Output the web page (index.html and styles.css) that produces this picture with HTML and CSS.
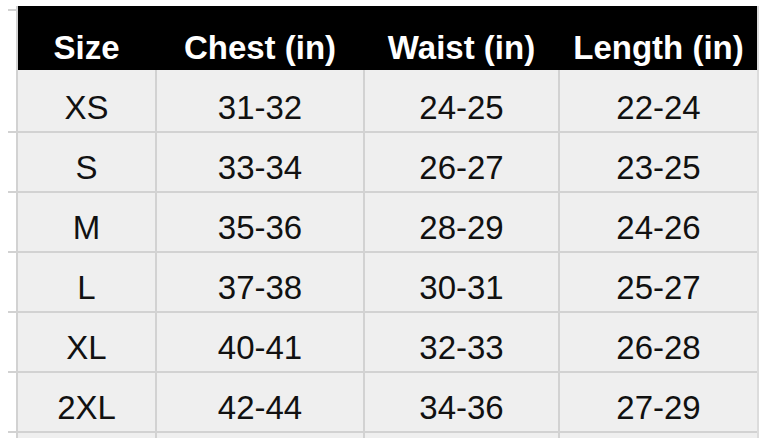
FILE: index.html
```html
<!DOCTYPE html>
<html>
<head>
<meta charset="utf-8">
<link rel="stylesheet" href="styles.css">
</head>
<body>
<div class="sheet">
  <div class="row head">
    <div class="gutter gutter-head"></div>
    <div class="cells">
      <div class="cell c1">Size</div>
      <div class="cell c2">Chest (in)</div>
      <div class="cell c3">Waist (in)</div>
      <div class="cell c4">Length (in)</div>
    </div>
  </div>
  <div class="row body first">
    <div class="gutter"></div>
    <div class="cells">
      <div class="cell c1">XS</div><div class="cell c2">31-32</div><div class="cell c3">24-25</div><div class="cell c4">22-24</div>
    </div>
  </div>
  <div class="row body">
    <div class="gutter"></div>
    <div class="cells">
      <div class="cell c1">S</div><div class="cell c2">33-34</div><div class="cell c3">26-27</div><div class="cell c4">23-25</div>
    </div>
  </div>
  <div class="row body">
    <div class="gutter"></div>
    <div class="cells">
      <div class="cell c1">M</div><div class="cell c2">35-36</div><div class="cell c3">28-29</div><div class="cell c4">24-26</div>
    </div>
  </div>
  <div class="row body">
    <div class="gutter"></div>
    <div class="cells">
      <div class="cell c1">L</div><div class="cell c2">37-38</div><div class="cell c3">30-31</div><div class="cell c4">25-27</div>
    </div>
  </div>
  <div class="row body">
    <div class="gutter"></div>
    <div class="cells">
      <div class="cell c1">XL</div><div class="cell c2">40-41</div><div class="cell c3">32-33</div><div class="cell c4">26-28</div>
    </div>
  </div>
  <div class="row body">
    <div class="gutter"></div>
    <div class="cells">
      <div class="cell c1">2XL</div><div class="cell c2">42-44</div><div class="cell c3">34-36</div><div class="cell c4">27-29</div>
    </div>
  </div>
  <div class="row tail">
    <div class="gutter"></div>
    <div class="cells">
      <div class="cell c1"></div><div class="cell c2"></div><div class="cell c3"></div><div class="cell c4"></div>
    </div>
  </div>
</div>
</body>
</html>
```
FILE: styles.css
```css
html, body {
  margin: 0;
  padding: 0;
  background: #ffffff;
}
body {
  width: 776px;
  height: 438px;
  overflow: hidden;
  font-family: "Liberation Sans", Arial, sans-serif;
}
.sheet {
  padding-top: 6px;
  padding-left: 8px;
}
.row {
  display: flex;
}
.gutter {
  width: 8px;
  flex: none;
  box-sizing: border-box;
  border-bottom: 2px solid #d2d2d2;
}
.gutter-head {
  border-bottom: none;
  margin-top: 3px;
  border-top: 2px solid #d2d2d2;
}
.cells {
  display: flex;
  border-left: 2px solid #d2d2d2;
  border-right: 2px solid #dcdcdc;
}
.cell {
  flex: none;
  text-align: center;
  box-sizing: border-box;
}
.c1 { width: 137px; }
.c2 { width: 208px; }
.c3 { width: 195px; }
.c4 { width: 199px; }

.head .cells {
  background: #000000;
}
.head .cell {
  height: 64px;
  padding-top: 22px;
  line-height: 40px;
  font-size: 33px;
  font-weight: bold;
  color: #ffffff;
}
.head .cell + .cell {
  border-left: 2px solid #000000;
}

.body .cell {
  height: 60px;
  padding-top: 15px;
  line-height: 40px;
  font-size: 33px;
  color: #111111;
  background: #efefef;
  border-bottom: 2px solid #d2d2d2;
}
.body .cell + .cell,
.tail .cell + .cell {
  border-left: 2px solid #d2d2d2;
}
.body .gutter {
  height: 60px;
}
.body.first .cell {
  height: 63px;
  padding-top: 18px;
}
.body.first .gutter {
  height: 63px;
}
.tail .cell {
  height: 5px;
  background: #efefef;
}
.tail .gutter {
  height: 5px;
  border-bottom: none;
}
```
